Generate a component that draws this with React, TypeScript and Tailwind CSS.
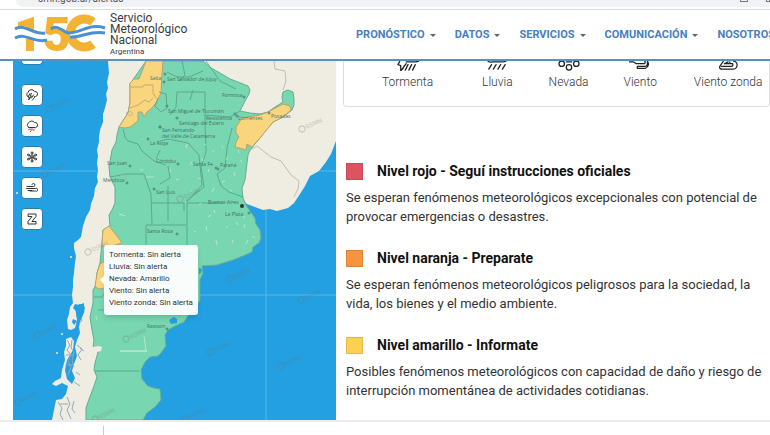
import type { ReactNode } from "react";

const NAV_ITEMS = ["PRONÓSTICO", "DATOS", "SERVICIOS", "COMUNICACIÓN", "NOSOTROS"];

const LEVELS = [
  {
    id: "rojo",
    swatch: "bg-[#dd5362]",
    title: "Nivel rojo - Seguí instrucciones oficiales",
    text: "Se esperan fenómenos meteorológicos excepcionales con potencial de provocar emergencias o desastres.",
  },
  {
    id: "naranja",
    swatch: "bg-[#f7943c]",
    title: "Nivel naranja - Preparate",
    text: "Se esperan fenómenos meteorológicos peligrosos para la sociedad, la vida, los bienes y el medio ambiente.",
  },
  {
    id: "amarillo",
    swatch: "bg-[#fcd152]",
    title: "Nivel amarillo - Informate",
    text: "Posibles fenómenos meteorológicos con capacidad de daño y riesgo de interrupción momentánea de actividades cotidianas.",
  },
];

const ALERTS = [
  "Tormenta: Sin alerta",
  "Lluvia: Sin alerta",
  "Nevada: Amarillo",
  "Viento: Sin alerta",
  "Viento zonda: Sin alerta",
];

const CITIES: { name: string; x: number; y: number; dot: [number, number] }[] = [
  { name: "Salta", x: 150, y: 80, dot: [164, 82] },
  { name: "San Salvador de Jujuy", x: 167, y: 81, dot: [165, 74] },
  { name: "Formosa", x: 222, y: 97, dot: [244, 97] },
  { name: "San Miguel de Tucumán", x: 168, y: 113, dot: [167, 106] },
  { name: "Resistencia", x: 206, y: 120, dot: [235, 114] },
  { name: "Corrientes", x: 238, y: 120, dot: [237, 116] },
  { name: "Posadas", x: 271, y: 118, dot: [269, 113] },
  { name: "Santiago del Estero", x: 179, y: 125, dot: [177, 118] },
  { name: "San Fernando", x: 162, y: 132, dot: [160, 127] },
  { name: "del Valle de Catamarca", x: 162, y: 138, dot: [160, 127] },
  { name: "La Rioja", x: 150, y: 145, dot: [148, 139] },
  { name: "Córdoba", x: 156, y: 163, dot: [178, 164] },
  { name: "Santa Fe", x: 193, y: 166, dot: [216, 168] },
  { name: "Paraná", x: 220, y: 167, dot: [218, 169] },
  { name: "San Juan", x: 107, y: 165, dot: [130, 166] },
  { name: "Mendoza", x: 103, y: 182, dot: [127, 183] },
  { name: "San Luis", x: 156, y: 194, dot: [154, 189] },
  { name: "Buenos Aires", x: 208, y: 204, dot: [242, 206] },
  { name: "La Plata", x: 225, y: 216, dot: [249, 213] },
  { name: "Santa Rosa", x: 147, y: 233, dot: [177, 234] },
  { name: "Rawson", x: 147, y: 328, dot: [167, 329] },
];

const WATERMARKS = [
  [49, 109], [45, 174], [88, 252], [37, 335], [18, 402], [126, 339], [302, 129],
  [230, 279], [301, 300], [210, 352], [281, 366], [180, 199], [185, 419], [95, 419],
];

const SPECKS =
  "M190 165l2-3M202 158l1 3M212 150l2 2M226 160l2-3M234 172l1 4M222 182l3-1M240 160l2 2M208 172l1-3M198 178l3 1M190 190l2 2M212 192l2-4M230 190l2 1M199 205l2-2M214 210l1 3M236 222l2 3M244 228l1-4M252 236l3 2M248 240l-2 4M226 228l2-2M206 226l1 5M194 232l2-1M216 240l1 5M233 240l-1 3M186 148l1-4M204 144l2 1M170 172l1-3M176 180l3-1M222 146l1 2M140 170l3 0M146 177l8 0M119 214l6 2M96 316l1 4M144 336l2 14M224 203l2 1M208 217l3-2M243 216l2 2M174 160l2 3M238 150l1 3";

function Svg({ children }: { children: ReactNode }) {
  return (
    <svg
      viewBox="0 0 24 24"
      className="size-3"
      fill="none"
      stroke="#333"
      strokeWidth="2"
      strokeLinecap="round"
      strokeLinejoin="round"
      aria-hidden="true"
    >
      {children}
    </svg>
  );
}

const CLOUD = "M6 15a5 5 0 0 1-1-9 7 7 0 0 1 12-1 5 5 0 0 1 2 10H6Z";

const MAP_BUTTONS = [
  {
    label: "Tormenta",
    icon: (
      <Svg>
        <path d="M5 16a5 5 0 0 1-1-9 7 7 0 0 1 13-2 5 5 0 0 1 2 10h-2" />
        <path d="m8 9-4 7h3l-2 6 6-8H8l3-5M17 17l-4 5M15 12l-4 6" />
      </Svg>
    ),
  },
  {
    label: "Lluvia",
    icon: (
      <Svg>
        <path d={CLOUD} />
        <path d="m7 18-1 1M17 18l-1 1M10 22l-1 1" />
        <path d="M12 17v2" stroke="#d33" />
        <path d="m8 19 3 1M14 20l2 1" stroke="#c55" />
      </Svg>
    ),
  },
  {
    label: "Nevada",
    icon: (
      <Svg>
        <g strokeWidth="1.5">
          <path d="M12 2v20M3 7l18 10M21 7 3 17" />
          <circle cx="12" cy="12" r="4" fill="#fff" />
          <circle cx="12" cy="4" r="2" />
          <circle cx="12" cy="20" r="2" />
          <circle cx="5" cy="8" r="2" />
          <circle cx="19" cy="8" r="2" />
          <circle cx="5" cy="16" r="2" />
          <circle cx="19" cy="16" r="2" />
          <path d="M12 9v6M9 11l6 3M15 11l-6 3" />
        </g>
      </Svg>
    ),
  },
  {
    label: "Viento",
    icon: (
      <Svg>
        <path d="M5 9h10a3 3 0 1 0-3-4M1 13h18a3 3 0 1 1 0 5H8M4 17h8M2 9h1" />
      </Svg>
    ),
  },
  {
    label: "Viento zonda",
    icon: (
      <Svg>
        <path d="M5 2h15v5l-8 10h8v5H4v-5l8-10H5Z" />
      </Svg>
    ),
  },
];

const PHENOMENA = [
  {
    label: "Tormenta",
    className: "ml-[38px] mr-[49px]",
    icon: <path d="M3 0 1 4l3 1v6l6-8M10 1h11l3-1M12 4l-3 6M16 4l-3 6M20 4l-3 6M8 5 6 9" />,
  },
  {
    label: "Lluvia",
    className: "mr-[36px]",
    icon: <path d="M2 0q2 2 5 1h10q4 0 5-1M6 4 3 9M11 4 8 9M16 4l-3 5M21 4l-3 5" />,
  },
  {
    label: "Nevada",
    className: "mr-[35px]",
    icon: (
      <>
        <circle cx="4" cy="3" r="3" />
        <circle cx="20" cy="3" r="3" />
        <circle cx="12" cy="7" r="3" />
        <path d="M9 1h6" />
      </>
    ),
  },
  {
    label: "Viento",
    className: "mr-[37px]",
    icon: <path d="M0 1h5l3 2h9a2 2 0 0 0 0-3M20 0a5 5 0 0 1-2 8H9V6h8a3 3 0 0 0 3-4" />,
  },
  {
    label: "Viento zonda",
    className: "",
    icon: <path d="M7 0 3 6q-1 3 3 3h11a4 4 0 0 0 1-9M5 6h11a2 2 0 0 0 1-3H9M8 3l4-2M14 3V1" />,
  },
];

function Logo() {
  return (
    <a href="#inicio" className="flex items-start gap-1 text-[#3b3b3d]">
      <svg
        viewBox="14 11 92 39"
        className="h-[39px] w-[92px] overflow-visible"
        role="img"
        aria-label="150 años"
      >
        <text
          x="14"
          y="49"
          fill="#f2b233"
          fontFamily="Roboto, sans-serif"
          fontWeight="900"
          fontSize="49"
        >
          15
        </text>
        <path d="M93 20a14 14 0 1 0 0 22" fill="none" stroke="#f2b233" strokeWidth="9" />
        <g fill="none">
          <path d="M15 31c10-6 18 6 31 3" stroke="#fff" strokeWidth="7" />
          <path d="M15 27c10-6 18 6 30 4" stroke="#4a90d2" strokeWidth="3" />
          <path d="M15 36c11-6 19 6 32 2" stroke="#4a90d2" strokeWidth="3" />
          <path d="M70 32c13 0 20-9 35-4" stroke="#fff" strokeWidth="5" />
          <path d="M51 27c7-5 10 2 17 4 14 0 21-10 37-5" stroke="#4a90d2" strokeWidth="3" />
          <path d="M70 35c12 1 20-7 35-4" stroke="#4a90d2" strokeWidth="3" />
        </g>
      </svg>
      <span className="flex flex-col text-[12px] leading-[11px]">
        <span>Servicio</span>
        <span>Meteorológico</span>
        <span>Nacional</span>
        <span className="text-[8px]">Argentina</span>
      </span>
    </a>
  );
}

function AlertMap() {
  return (
    <svg
      viewBox="13 61 323 359"
      className="block h-auto w-full bg-[#23a0e1]"
      role="img"
      aria-label="Mapa de alertas"
    >
      {/* Chile */}
      <path
        fill="#efece1"
        d="M108 61L109 73L107 82L108 88L106 94L107 100L105 108L103 114L103 122L100 130L99 137L99 142L97 150L98 156L97 163L98 170L97 177L98 182L95 188L94 196L91 204L90 210L86 217L83 226L81 237L78 240L74 243L74 248L76 256L75 263L74 273L73 280L73 287L72 295L73 303L70 307L69 314L67 320L68 329L71 330L75 328L77 320L76 313L75 306L80 304L85 307L84 313L81 318L79 327L80 333L77 340L75 347L77 356L74 364L72 371L75 378L72 384L67 379L65 370L67 360L73 350L74 341L71 337L66 339L66 346L64 352L65 360L62 370L61 378L55 381L52 384L56 386L62 383L68 386L66 394L62 399L56 400L54 410L52 420H100L165 61Z"
      />
      {/* Paraguay, Brasil, Uruguay */}
      <path
        fill="#efece1"
        d="M200 61H336V141L331 154L326 162L319 171L310 176L305 186L300 194L294 203L288 208L277 211L270 209L263 210L255 207L247 204L235 195V150L225 105Z"
      />
      {/* fiordos del sur */}
      <path
        fill="none"
        stroke="#8fa9c4"
        strokeWidth="1"
        d="M67 340l3 5-3 5 4 5-3 6 3 6-3 8M72 340l-1 8 3 4-2 9 2 6M77 345l5 4-4 6 3 5M58 402l4 6-2 6 3 6M67 397l3 7-3 6 4 9M74 401l-2 8 3 4M80 348l4 3M76 372l4 3M78 318l4 2-3 4M74 382l6 4M60 404h8M66 355h7M65 365h9"
      />
      <path fill="#23a0e1" d="M75 304l4 1 5-2v5l-4 3 3 4-2 5-4-2-1-7-3-3ZM73 319l4 2-3 4-2-3Z" />
      <g fill="#efece1">
        <circle cx="62" cy="334" r="1" />
        <circle cx="57" cy="353" r="1" />
        <circle cx="71" cy="257" r="1" />
        <circle cx="17" cy="193" r="1" />
      </g>

      {/* territorio sin alerta */}
      <path
        fill="#78d6b1"
        stroke="#63ae95"
        strokeWidth="1"
        d="M146 61H203L211 68L220 73L230 79L238 82L248 86L250 90L249 94L245 101L240 111L250 113L260 114L268 112L275 107L283 102L282 97L283 92L288 90L293 92L294 99L294 105L292 110L283 117L273 122L267 129L260 138L255 144L250 150L248 155L247 163L246 172L245 180L242 188L243 198L246 205L250 211L255 218L256 224L260 230L261 238L259 243L253 247L252 252L243 256L233 260L217 265L202 266L203 273L200 280V300L194 310L188 316L184 322L175 326L168 330L165 335L166 346L161 353L158 356L150 357L145 362L141 370L142 379L148 386L154 388L160 389L161 400L155 407L147 413L143 420H86L86 408L88 402L91 394L94 386L97 377L94 370L95 363L98 352L93 348L94 340L92 330L90 317L93 303V290L96 285L97 273L100 263L102 243L103 230L110 226L109 215L112 210L115 203V187L110 177L109 167L112 150L116 142L117 135L119 127L128 113L130 103V84Z"
      />
      {/* meseta chilena dentro del límite */}
      <path fill="#efece1" d="M92 347l7-1 3 1-1 4-4 1-3 8h-4Z" />
      <path fill="#23a0e1" d="M169 320l5-3 3 2v4l-6 1ZM199 268l3 1-1 4-2 1Z" />

      {/* alerta amarilla */}
      <g fill="#f9d57d" stroke="#b9a268" strokeWidth="1">
        <path d="M146 61H163L162 74L161 93L156 103L152 108L147 112L144 117L142 112L138 112L138 121L134 124L130 127L125 128L119 127L128 113L130 103V83L134 79H139Z" />
        <path d="M242 118L260 115L268 112L283 104L290 106L291 110L283 117L273 122L260 138L252 147L247 144L246 150L243 149L235 147L236 142L239 137L236 133L236 127Z" />
        <path d="M102 243L103 230L109 226L117 236L122 243L112 246H102Z" />
        <path d="M100 264L105 261V288L99 289L95 287L97 273Z" />
      </g>

      {/* límites provinciales */}
      <g fill="none" stroke="#4f9884" strokeWidth="1" opacity="0.7">
        <path d="M158 98l-3 8 6 6 6-4-1-14-7-2" />
        <path d="M123 129l2 8 3 4 10 3 4 7 12 10 12 4M167 72l10 5 12 0 14-6M177 92h28v30M206 61l14 20 16 8M177 92l-1 15-6 8M205 122l1 30-5 15 3 20-18 14M232 128l-5 20-2 20-8 6 4 12 8 6 14 5M110 177l16-3 18 0 7 20 1 30M160 141l8-2 20 4 11 12 3 30-15 17M160 184l10-6-2-12M152 203h32v8M168 186v35M187 203h38M187 203v42M146 225h40M146 225v20M95 371h44M94 297l8 0 6-8M98 310h6" />
        <path d="M182 61l3 14-6 6M190 100l3-10M205 115l25 2 10-6M160 150l-4 9" />
      </g>
      <g fill="none" stroke="#b59a64" strokeWidth="1" opacity="0.7">
        <path d="M131 87h12l1-2h9v8l3 5M130 108l8-3 7-5 4 2 4-4" />
      </g>
      <g fill="none" stroke="#a9a9a4" strokeWidth="1" opacity="0.7">
        <path d="M274 61l1 8 10 2 1 10-3 9M250 150l7-4 14 11 10 4 10 14 8 6-1 8-4 8M126 113l4-2 3 3-3 2ZM119 177l3-3 4 1v4" />
      </g>
      <path d={SPECKS} stroke="#c4f0c9" strokeWidth="1" opacity="0.8" />
      <path d="M120 351h27" stroke="#d9f5e4" strokeWidth="1" />

      {/* grilla */}
      <path
        d="M13 171h84M320 171h16M13 295h59M199 295h137M266 210v210"
        stroke="#58b7e8"
        strokeWidth="1"
      />

      {WATERMARKS.map(([x, y]) => (
        <g key={`${x}-${y}`} opacity="0.32" transform={`rotate(-25 ${x} ${y})`}>
          <circle cx={x} cy={y} r="3" fill="none" stroke="#77716f" strokeWidth="1" />
          <text x={x + 4} y={y + 2} fontSize="6" fontFamily="Roboto, sans-serif" fill="#77716f">
            ©SMN
          </text>
        </g>
      ))}

      <g fontFamily="'Open Sans', sans-serif" fontSize="5" fill="#3d7367">
        {CITIES.map((c) => (
          <g key={c.name}>
            <circle cx={c.dot[0]} cy={c.dot[1]} r="1" fill="none" stroke="#4c8475" strokeWidth="1" />
            <text x={c.x} y={c.y}>{c.name}</text>
          </g>
        ))}
      </g>
      <circle cx="242" cy="206" r="2" fill="#333" />
    </svg>
  );
}

export default function App() {
  return (
    <div className="overflow-hidden bg-white font-[Roboto,sans-serif] text-[#333]">
      <div className="h-[10px] overflow-hidden border-b border-[#dcdcde] pl-4">
        <div className="flex h-[7px] items-end justify-between overflow-hidden rounded-bl-full bg-[#f1f2f5] pl-[22px]">
          <input
            aria-label="Dirección"
            readOnly
            value="smn.gob.ar/alertas"
            className="mb-[2px] w-40 bg-transparent text-[10px] leading-[12px] text-[#55585c] outline-none"
          />
          <span className="mb-[5px] flex gap-[18px]" aria-hidden="true">
            <span className="h-2 w-2 border border-[#777]" />
            <span className="h-2 w-1 border border-[#777]" />
          </span>
        </div>
      </div>

      <header className="grid h-[51px] grid-cols-[minmax(0,329fr)_minmax(0,427fr)] items-center border-b-2 border-[#5b8fc0] pl-[14px]">
        <Logo />
        <nav className="flex gap-[19px] pt-[2px] pl-[13px] text-[11px] font-bold text-[#4680c2]">
          {NAV_ITEMS.map((item) => (
            <a
              key={item}
              href={`#${item.toLowerCase()}`}
              className="flex shrink-0 items-center gap-[5px]"
            >
              {item}
              <span className="border-x-[3px] border-t-[3px] border-x-transparent border-t-[#666]" />
            </a>
          ))}
        </nav>
      </header>

      <main className="grid grid-cols-[minmax(0,323fr)_minmax(0,434fr)] items-start pl-[13px]">
        <section className="relative overflow-hidden">
          <AlertMap />
          <div className="absolute top-0 left-2 flex flex-col">
            <button
              aria-label="General"
              className="mb-[19px] h-1 w-[22px] rounded-b border border-t-0 border-[#2b7fae] bg-white"
            />
            <div className="flex flex-col gap-[9px]">
              {MAP_BUTTONS.map((b) => (
                <button
                  key={b.label}
                  aria-label={b.label}
                  className="flex size-[22px] items-center justify-center rounded border border-[#2b7fae] bg-white"
                >
                  {b.icon}
                </button>
              ))}
            </div>
          </div>
          <div
            role="tooltip"
            className="absolute top-[184px] left-[91px] rounded-[3px] bg-white/95 px-[5px] pt-1 pb-[6px] text-[8px] leading-[12px] whitespace-nowrap shadow-md"
          >
            {ALERTS.map((a) => (
              <p key={a}>{a}</p>
            ))}
            <span className="absolute top-1/2 right-full -mt-1 border-y-4 border-r-4 border-y-transparent border-r-white/95" />
          </div>
        </section>

        <section className="pl-[7px]">
          <ul className="flex overflow-hidden rounded-b border border-t-0 border-[#dedede] pb-[15px] text-[12px] leading-[18px] font-light text-[#333]">
            {PHENOMENA.map((p) => (
              <li key={p.label} className={`flex shrink-0 flex-col items-center gap-[2px] ${p.className}`}>
                <svg
                  viewBox="0 0 24 11"
                  className="h-[10px] w-[22px]"
                  fill="none"
                  stroke="#222"
                  strokeWidth="1.4"
                  strokeLinecap="round"
                  strokeLinejoin="round"
                  aria-hidden="true"
                >
                  {p.icon}
                </svg>
                {p.label}
              </li>
            ))}
          </ul>

          <div className="mt-[54px] flex flex-col gap-[22px] pl-[3px]">
            {LEVELS.map((l) => (
              <article key={l.id}>
                <div className="flex items-center gap-[14px]">
                  <span className={`size-[17px] border border-black/10 ${l.swatch}`} />
                  <h2 className="text-[14px] leading-5 font-bold text-[#111]">{l.title}</h2>
                </div>
                <p className="mt-[7px] text-[13px] leading-[19px]">{l.text}</p>
              </article>
            ))}
          </div>
        </section>
      </main>

      <footer className="border-t-2 border-[#ececec] pt-1">
        <div className="ml-[103px] h-[9px] border-l border-[#ccc]" />
      </footer>
    </div>
  );
}
